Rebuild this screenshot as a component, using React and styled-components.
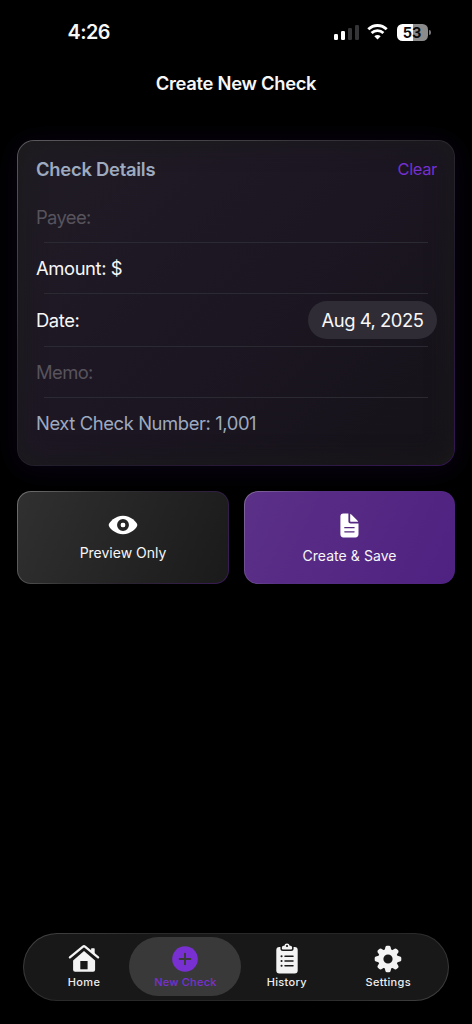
import React from "react";
import styled, { createGlobalStyle } from "styled-components";

const GlobalStyle = createGlobalStyle`
  *, *::before, *::after { box-sizing: border-box; }
  html, body { margin: 0; background: #000; }
  body { font-family: Inter, "Liberation Sans", sans-serif; color: #fff; overflow: hidden; }
  button { font: inherit; color: inherit; padding: 0; border: 0; background: none; }
`;

const Screen = styled.div`
  width: 472px;
  height: 1024px;
  background: #000;
  display: flex;
  flex-direction: column;
`;

const StatusBar = styled.header`
  height: 64px;
  padding: 0 41.5px 0 67.5px;
  display: flex;
  align-items: center;
  justify-content: space-between;
`;

const Text = styled.span`
  display: block;
  white-space: nowrap;
  font-size: ${(p) => p.$size}px;
  line-height: ${(p) => p.$line || 24}px;
  font-weight: ${(p) => p.$weight || 400};
  letter-spacing: ${(p) => p.$track || 0}px;
  color: ${(p) => p.$color || "#f7f7f8"};
`;

const StatusIcons = styled.div`
  display: flex;
  align-items: center;
  gap: 8.5px;
`;

const Signal = styled.div`
  display: flex;
  align-items: flex-end;
  gap: 2.7px;
  height: 15px;
`;

const Bar = styled.i`
  width: 4px;
  height: ${(p) => p.$h}px;
  border-radius: 1.2px;
  background: ${(p) => (p.$on ? "#fff" : "#353537")};
`;

const Battery = styled.div`
  display: flex;
  align-items: center;
  gap: 1px;
`;

const BatteryBody = styled.div`
  width: 31px;
  height: 17px;
  border-radius: 5.5px;
  background: linear-gradient(90deg, #fff 53%, #8b8b8b 53%);
  display: flex;
  justify-content: center;
  align-items: center;
`;

const BatteryTip = styled.i`
  width: 2px;
  height: 5px;
  border-radius: 0 2px 2px 0;
  background: #77777a;
`;

const TitleBar = styled.div`
  height: 40px;
  padding-bottom: 2px;
  display: flex;
  align-items: center;
  justify-content: center;
`;

const Content = styled.main`
  flex: 1;
  padding: 36px 17px 0;
`;

const Card = styled.section`
  height: 326px;
  width: 438px;
  border: 1px solid transparent;
  border-radius: 17px;
  padding: 0 17px 0 18px;
  background:
    linear-gradient(135deg, #201c24 0%, #1d1724 40%, #151218 100%) padding-box,
    linear-gradient(150deg, #5a595c 0%, #2d2b30 38%, #211a2a 65%, #351653 100%) border-box;
  box-shadow: 0 3px 26px rgba(55, 20, 115, 0.2), inset 0 0 26px rgba(26, 26, 25, 0.95);
`;

const CardHeader = styled.div`
  height: 51px;
  padding-top: 5px;
  display: flex;
  align-items: center;
  justify-content: space-between;
`;

const Row = styled.div`
  height: ${(p) => p.$h || 51}px;
  display: flex;
  align-items: center;
  justify-content: space-between;
`;

const Divider = styled.hr`
  height: 1px;
  margin: 0 9px 0 8px;
  border: 0;
  background: #2b2932;
`;

const DatePill = styled.button`
  width: 129px;
  height: 38px;
  border-radius: 19px;
  background: #302c36;
  display: flex;
  align-items: center;
  justify-content: center;
`;

const Actions = styled.div`
  margin-top: 25px;
  display: flex;
  gap: 15px;
`;

const Action = styled.button`
  width: ${(p) => (p.$primary ? 211 : 212)}px;
  height: 93px;
  border: 1px solid transparent;
  border-radius: 14px;
  display: flex;
  flex-direction: column;
  align-items: center;
  padding-top: ${(p) => (p.$primary ? 20 : 19)}px;
  gap: ${(p) => (p.$primary ? 8 : 4)}px;
  background: ${(p) =>
    p.$primary
      ? "linear-gradient(115deg, #5b3087, #4f2181) padding-box, linear-gradient(115deg, #83699d 0%, #573084 30%, #4f2380 100%) border-box"
      : "linear-gradient(115deg, #303030, #1a1a1a) padding-box, linear-gradient(115deg, #737373 0%, #343434 35%, #29222f 60%, #3a1b57 100%) border-box"};
`;

const IconBox = styled.div`
  height: ${(p) => p.$h}px;
  display: flex;
  align-items: center;
  justify-content: center;
  svg { display: block; }
`;

const TabBar = styled.nav`
  width: 426px;
  height: 68px;
  margin: 0 auto 23.5px 23px;
  padding: 3px 4px;
  border: 1px solid transparent;
  border-radius: 34px;
  background:
    linear-gradient(#181818, #181818) padding-box,
    linear-gradient(145deg, #454545 0%, #2a2a2a 25%, #252525 70%, #424242 100%) border-box;
  display: flex;
`;

const Tab = styled.button`
  width: 112px;
  height: 59.5px;
  margin-right: -10.6px;
  border-radius: 30px;
  background: ${(p) => (p.$active ? "#393939" : "transparent")};
  display: flex;
  flex-direction: column;
  align-items: center;
  padding-top: 6px;
`;

const Wifi = () => (
  <svg width="21" height="16" viewBox="0 0 21 16" fill="none" stroke="#fff" strokeWidth="2.8">
    <path d="M1.3 5.3C6.5.2 14.5.2 19.7 5.3" />
    <path d="M4.6 9c3.3-3.2 8.5-3.2 11.8 0" />
    <path d="M10.5 15.5l-3.2-3.3c1.8-1.7 4.6-1.7 6.4 0z" fill="#fff" stroke="none" />
  </svg>
);

const Eye = () => (
  <svg width="30" height="20" viewBox="0 0 30 20">
    <path fill="#fff" d="M15 .7C7.4.7.7 7.2.7 10S7.4 19.3 15 19.3 29.3 12.8 29.3 10 22.6.7 15 .7z" />
    <circle cx="15" cy="10" r="4.15" fill="#fff" stroke="#252525" strokeWidth="3.6" />
    <circle cx="15" cy="10" r="2.2" fill="#fff" />
  </svg>
);

const Doc = () => (
  <svg width="19" height="25" viewBox="0 0 19 25">
    <path fill="#fff" d="M3.3.5H8.4V8.2C8.4 9.6 9.2 10.4 10.6 10.4H18.5V21.3C18.5 23.4 17.4 24.4 15.4 24.4H3.4C1.4 24.4.4 23.4.4 21.3V3.6C.4 1.5 1.4.5 3.3.5z" />
    <path fill="#fff" d="M10.2.7C10.7.9 11.1 1.3 11.6 1.8L17.1 7.3C17.6 7.8 18 8.3 18.2 8.8H11C10.4 8.8 10.2 8.6 10.2 8z" />
    <path d="M4.8 14.7h9.3M4.8 18.8h9.3" stroke="#54297f" strokeWidth="1.3" strokeLinecap="round" />
  </svg>
);

const Home = () => (
  <svg width="32" height="30" viewBox="0 0 32 30">
    <path fill="#f3f3f3" d="M16 7l11.1 9.5v9.2q0 2-2 2H7.1q-2 0-2-2v-9.2z" />
    <path d="M2.2 13.7L15 2.8q1-.8 2 0l12.8 10.9" fill="none" stroke="#181818" strokeWidth="5" strokeLinejoin="round" />
    <path d="M1.9 13.4L15 2.6q1-.8 2 0l13.1 10.8" fill="none" stroke="#f3f3f3" strokeWidth="2.3" strokeLinecap="round" strokeLinejoin="round" />
    <path fill="#f3f3f3" d="M23.7 4.3h2.4q.6 0 .6.6v6.3L23.1 8.2V4.9q0-.6.6-.6z" />
    <path fill="#181818" d="M12.3 17h7.3v8.3h-7.3z" />
  </svg>
);

const Plus = () => (
  <svg width="26" height="26" viewBox="0 0 26 26">
    <circle cx="13" cy="13" r="12.8" fill="#7930d2" />
    <path d="M13 7.7v10.6M7.7 13h10.6" stroke="#393939" strokeWidth="2" strokeLinecap="round" />
  </svg>
);

const Clipboard = () => (
  <svg width="24" height="32" viewBox="0 0 24 32">
    <rect x="1.3" y="3.9" width="21.4" height="26.6" rx="3" fill="#f3f3f3" />
    <path d="M7.9 6.4q-1 0-1-1V4.4q0-1.6 1.6-1.6h.8a2.75 2.75 0 0 1 5.4 0h.8q1.6 0 1.6 1.6v1q0 1-1 1z" fill="#f3f3f3" stroke="#181818" strokeWidth="3" />
    <path d="M7.9 6.4q-1 0-1-1V4.4q0-1.6 1.6-1.6h.8a2.75 2.75 0 0 1 5.4 0h.8q1.6 0 1.6 1.6v1q0 1-1 1z" fill="#f3f3f3" />
    <circle cx="12" cy="3" r="1.1" fill="#181818" />
    <path d="M10 13.2h8M10 18h8M10 22.7h8" stroke="#181818" strokeWidth="1.5" strokeLinecap="round" />
    <path d="M6.5 13.2h.1M6.5 18h.1M6.5 22.7h.1" stroke="#181818" strokeWidth="2" strokeLinecap="round" />
  </svg>
);

const Gear = () => (
  <svg width="28" height="28" viewBox="0 0 28 28">
    <g fill="#f3f3f3">
      {[0, 45, 90, 135, 180, 225, 270, 315].map((a) => (
        <path key={a} transform={`rotate(${a} 14 14)`} d="M10.6 5.4L11.4 2Q11.8.7 13 .7h2q1.2 0 1.6 1.3l.8 3.4z" />
      ))}
    </g>
    <circle cx="14" cy="14" r="7.3" fill="none" stroke="#f3f3f3" strokeWidth="5.4" />
  </svg>
);

const tabs = [
  { label: "Home", Icon: Home, track: 0.4 },
  { label: "New Check", Icon: Plus, track: 0.25, active: true },
  { label: "History", Icon: Clipboard, track: 0.3 },
  { label: "Settings", Icon: Gear, track: 0.3 },
];

export default function App() {
  return (
    <>
      <GlobalStyle />
      <Screen>
        <StatusBar>
          <Text $size={19.8} $weight={600} $track={-0.5}>4:26</Text>
          <StatusIcons>
            <Signal>
              <Bar $h={6} $on />
              <Bar $h={8.5} $on />
              <Bar $h={12} />
              <Bar $h={15} />
            </Signal>
            <Wifi />
            <Battery>
              <BatteryBody>
                <Text $size={14.5} $weight={700} $line={17} $track={-0.1} $color="#0a0a0a">53</Text>
              </BatteryBody>
              <BatteryTip />
            </Battery>
          </StatusIcons>
        </StatusBar>
        <TitleBar>
          <Text $size={18.4} $weight={600} $track={-0.3}>Create New Check</Text>
        </TitleBar>
        <Content>
          <Card>
            <CardHeader>
              <Text $size={18.4} $weight={600} $track={-0.25} $color="#9daabf">Check Details</Text>
              <Text $size={16.4} $track={-0.3} $color="#7630ce">Clear</Text>
            </CardHeader>
            <Row $h={50}><Text $size={18.4} $track={-0.65} $color="#57535c">Payee:</Text></Row>
            <Divider />
            <Row $h={50}><Text $size={18.4} $track={-0.4}>Amount: $</Text></Row>
            <Divider />
            <Row $h={52}>
              <Text $size={18.4} $track={-0.4}>Date:</Text>
              <DatePill><Text $size={18.4} $track={-0.45}>Aug 4, 2025</Text></DatePill>
            </Row>
            <Divider />
            <Row $h={50}><Text $size={18.4} $track={-0.6} $color="#57535c">Memo:</Text></Row>
            <Divider />
            <Row $h={50}><Text $size={18.4} $track={-0.4} $color="#9daabf">Next Check Number: 1,001</Text></Row>
          </Card>
          <Actions>
            <Action>
              <IconBox $h={28}><Eye /></IconBox>
              <Text $size={14} $line={20} $track={0}>Preview Only</Text>
            </Action>
            <Action $primary>
              <IconBox $h={26}><Doc /></IconBox>
              <Text $size={14} $line={20} $track={0.06}>Create &amp; Save</Text>
            </Action>
          </Actions>
        </Content>
        <TabBar>
          {tabs.map(({ label, Icon, track, active }) => (
            <Tab key={label} $active={active}>
              <IconBox $h={32}><Icon /></IconBox>
              <Text $size={11} $weight={500} $line={15} $track={track} $color={active ? "#7930d2" : "#ededed"}>{label}</Text>
            </Tab>
          ))}
        </TabBar>
      </Screen>
    </>
  );
}
